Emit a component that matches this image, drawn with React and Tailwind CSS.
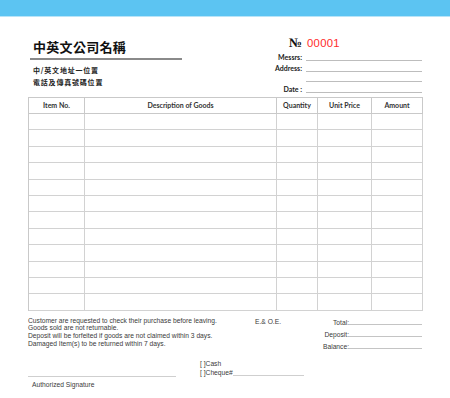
export default function App() {
  const rows = Array.from({ length: 12 });
  const cols = ['Item No.', 'Description of Goods', 'Quantity', 'Unit Price', 'Amount'];
  return (
    <div className="w-[450px] h-[398px] bg-white overflow-hidden text-[#222]">
      <div className="h-[16px] bg-[#5cc4f2]" />
      <div className="h-[1px] bg-[#b8e4f8]" />
      {/* header */}
      <div className="flex h-[80px] pl-[30px] pr-[28px]">
        <div className="w-[152px] flex flex-col">
          <div className="mt-[23px] h-[14px] leading-[14px] pl-[3px] text-[13px] font-bold tracking-[0.3px] text-[#111] whitespace-nowrap font-['Noto_Sans_CJK_TC','Noto_Sans_CJK_SC',sans-serif]">
            中英文公司名稱
          </div>
          <div className="mt-[4px] h-[2px] bg-[#8a8a8a]" />
          <div className="mt-[5px] h-[10px] leading-[10px] pl-[3px] text-[7px] font-bold tracking-[0.8px] text-[#222] whitespace-nowrap font-['Noto_Sans_CJK_TC','Noto_Sans_CJK_SC',sans-serif]">
            中/英文地址一位置
          </div>
          <div className="mt-[2px] h-[10px] leading-[10px] pl-[3px] text-[7px] font-bold tracking-[0.8px] text-[#222] whitespace-nowrap font-['Noto_Sans_CJK_TC','Noto_Sans_CJK_SC',sans-serif]">
            電話及傳真號碼位置
          </div>
        </div>
        <div className="ml-auto w-[152px] flex flex-col font-['Lato',sans-serif]">
          <div className="mt-[18px] h-[16px] flex items-center">
            <div className="w-[32px] text-right text-[13px] font-bold leading-[16px] text-[#111] font-['Liberation_Serif','DejaVu_Serif',serif]">
              №
            </div>
            <div className="ml-[5px] text-[11.3px] leading-[16px] tracking-[0.3px] text-[#ff2b2b] font-['Liberation_Sans',Arial,sans-serif]">
              00001
            </div>
          </div>
          <div className="h-[10px] flex items-end">
            <div className="w-[32px] text-right text-[7px] font-bold leading-[8px] whitespace-nowrap">Messrs:</div>
            <div className="ml-[4px] flex-1 border-b border-[#bdbdbd]" />
          </div>
          <div className="h-[11px] flex items-end">
            <div className="w-[32px] text-right text-[7px] font-bold leading-[8px] whitespace-nowrap">Address:</div>
            <div className="ml-[4px] flex-1 border-b border-[#bdbdbd]" />
          </div>
          <div className="h-[10px] flex items-end">
            <div className="w-[32px]" />
            <div className="ml-[4px] flex-1 border-b border-[#bdbdbd]" />
          </div>
          <div className="h-[11px] flex items-end">
            <div className="w-[32px] text-right text-[7px] font-bold leading-[8px] whitespace-nowrap">Date :</div>
            <div className="ml-[4px] flex-1 border-b border-[#bdbdbd]" />
          </div>
        </div>
      </div>

      {/* table */}
      <div className="ml-[28px] w-[395px] border-l border-t border-[#c9c9c9] grid grid-cols-[56px_192px_41px_54px_51px] font-['Lato',sans-serif]">
        {cols.map((c) => (
          <div
            key={c}
            className="h-[16px] border-r border-b border-[#c9c9c9] flex items-center justify-center text-[7px] font-bold text-[#333] whitespace-nowrap"
          >
            {c}
          </div>
        ))}
        {rows.map((_, r) =>
          cols.map((c) => (
            <div key={r + c} className="h-[16.4px] border-r border-b border-[#d2d2d2]" />
          ))
        )}
      </div>

      {/* footer row A */}
      <div className="flex pl-[28px] pr-[28px] font-['Liberation_Sans',Arial,sans-serif] text-[6.7px] text-[#3a3a3a]">
        <div className="w-[227px] mt-[6px] leading-[7.75px] whitespace-nowrap">
          <div>Customer are requested to check their purchase before leaving.</div>
          <div>Goods sold are not returnable.</div>
          <div>Deposit will be forfeited if goods are not claimed within 3 days.</div>
          <div>Damaged Item(s) to be returned within 7 days.</div>
        </div>
        <div className="mt-[7px] leading-[7.75px] whitespace-nowrap">E.&amp; O.E.</div>
        <div className="ml-auto w-[100px] mt-[5px] flex flex-col">
          <div className="h-[9px] flex items-end">
            <div className="w-[27px] text-right leading-[8px] mb-[-2px] whitespace-nowrap">Total:</div>
            <div className="flex-1 border-b border-[#c4c4c4]" />
          </div>
          <div className="h-[12px] flex items-end">
            <div className="w-[27px] text-right leading-[8px] mb-[-2px] whitespace-nowrap">Deposit:</div>
            <div className="flex-1 border-b border-[#c4c4c4]" />
          </div>
          <div className="h-[12px] flex items-end">
            <div className="w-[27px] text-right leading-[8px] mb-[-2px] whitespace-nowrap">Balance:</div>
            <div className="flex-1 border-b border-[#c4c4c4]" />
          </div>
        </div>
      </div>

      {/* footer row B */}
      <div className="flex pl-[28px] font-['Liberation_Sans',Arial,sans-serif] text-[6.7px] text-[#3a3a3a]">
        <div className="w-[148px] flex flex-col">
          <div className="mt-[27px] h-[1px] bg-[#cfcfcf]" />
          <div className="mt-[4px] pl-[4px] leading-[8px] whitespace-nowrap">Authorized Signature</div>
        </div>
        <div className="ml-[24px] mt-[10px] leading-[9.4px] whitespace-nowrap">
          <div>[ ]Cash</div>
          <div>
            [ ]Cheque#
            <span className="inline-block w-[71px] h-[6px] border-b border-[#cfcfcf] translate-y-[1px]" />
          </div>
        </div>
      </div>
    </div>
  );
}
